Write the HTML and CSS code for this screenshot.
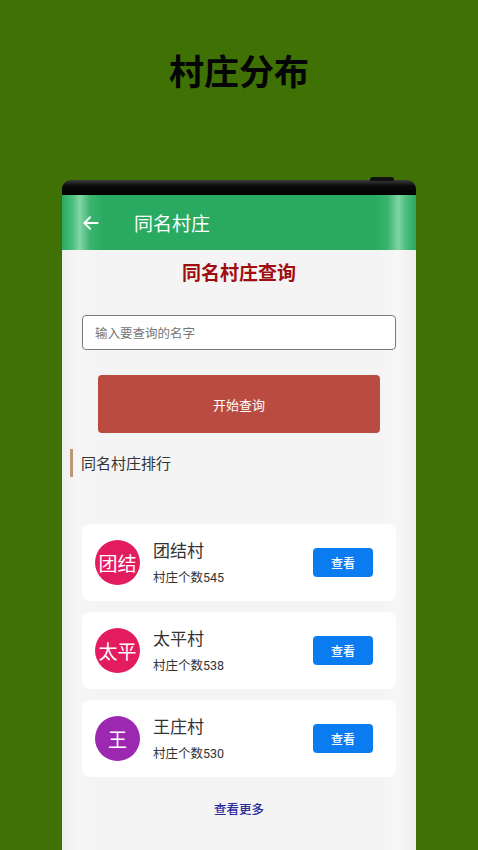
FILE: index.html
```html
<!DOCTYPE html>
<html lang="zh-CN">
<head>
    <meta charset="UTF-8">
    <meta name="viewport" content="width=device-width, initial-scale=1.0">
    <title>村庄分布</title>
    <link rel="stylesheet" href="styles.css">
</head>
<body>
    <h1 class="page-title">村庄分布</h1>

    <div class="phone">
        <div class="bezel"><span class="camera"></span></div>

        <div class="app-bar">
            <svg class="back-icon" viewBox="0 0 24 24" width="20" height="20">
                <path d="M20 12H5M11 5l-7 7 7 7" fill="none" stroke="#fff" stroke-width="2.2" stroke-linecap="round" stroke-linejoin="round"/>
            </svg>
            <span class="app-title">同名村庄</span>
        </div>

        <div class="content">
            <h2 class="query-title">同名村庄查询</h2>
            <input class="name-input" type="text" placeholder="输入要查询的名字">
            <button class="query-btn">开始查询</button>

            <div class="section-head">同名村庄排行</div>

            <div class="rank-list">
                <div class="rank-card">
                    <div class="avatar pink">团结</div>
                    <div class="rank-info">
                        <div class="rank-name">团结村</div>
                        <div class="rank-count">村庄个数545</div>
                    </div>
                    <button class="view-btn">查看</button>
                </div>
                <div class="rank-card">
                    <div class="avatar pink">太平</div>
                    <div class="rank-info">
                        <div class="rank-name">太平村</div>
                        <div class="rank-count">村庄个数538</div>
                    </div>
                    <button class="view-btn">查看</button>
                </div>
                <div class="rank-card">
                    <div class="avatar purple">王</div>
                    <div class="rank-info">
                        <div class="rank-name">王庄村</div>
                        <div class="rank-count">村庄个数530</div>
                    </div>
                    <button class="view-btn">查看</button>
                </div>
            </div>

            <div class="more-link">查看更多</div>
        </div>
    </div>
</body>
</html>
```

FILE: styles.css
```css
/* General Styling */
body {
    margin: 0;
    width: 478px;
    height: 850px;
    overflow: hidden;
    background: #3f7104;
    font-family: Roboto, "Noto Sans CJK SC", sans-serif;
}

.page-title {
    margin: 0;
    padding-top: 48px;
    height: 44px;
    line-height: 44px;
    text-align: center;
    font-family: "Noto Sans CJK SC", sans-serif;
    font-size: 35px;
    font-weight: 700;
    color: #050505;
}

/* Phone frame */
.phone {
    position: relative;
    width: 354px;
    margin: 88px 0 0 62px;
}

.bezel {
    position: relative;
    height: 15px;
    background: linear-gradient(to bottom, #3a3a3a 0%, #0a0a0a 40%, #000 100%);
    border-radius: 9px 9px 0 0;
}

.camera {
    position: absolute;
    top: -3px;
    right: 22px;
    width: 24px;
    height: 4px;
    background: #111;
    border-radius: 3px 3px 0 0;
}

.app-bar {
    display: flex;
    align-items: center;
    height: 55px;
    padding-left: 19px;
    background: linear-gradient(to right, #2aa860 0%, #4cc07f 3%, #84d5a8 5%, #3ab46d 8%, #2aa961 12%, #2aa961 88%, #38b36c 92%, #80d4a5 95%, #4fbf80 97%, #2aa860 100%);
}

.back-icon {
    display: block;
}

.app-title {
    margin-left: 33px;
    font-family: "Noto Sans CJK SC", sans-serif;
    font-size: 19px;
    color: #fff;
}

/* Content */
.content {
    display: flex;
    flex-direction: column;
    align-items: center;
    height: 620px;
    background: linear-gradient(to right, #eeeeee 0%, #f6f6f6 4%, #f4f4f4 10%, #f4f4f4 90%, #f7f7f8 95%, #eeeeee 100%);
}

.query-title {
    margin: 10px 0 0;
    line-height: 24px;
    font-family: "Noto Sans CJK SC", sans-serif;
    font-size: 19px;
    font-weight: 700;
    color: #a00d10;
}

.name-input {
    box-sizing: border-box;
    width: 314px;
    height: 35px;
    margin-top: 31px;
    padding: 0 12px;
    border: 1px solid #7a7a7a;
    border-radius: 4px;
    background: #fff;
    font-family: "Noto Sans CJK SC", sans-serif;
    font-size: 12.5px;
    outline: none;
}

.name-input::placeholder {
    color: #777;
}

.query-btn {
    width: 282px;
    height: 58px;
    margin-top: 25px;
    border: none;
    border-radius: 4px;
    background: #b94b40;
    color: #fff;
    font-family: "Noto Sans CJK SC", sans-serif;
    font-size: 13px;
}

.section-head {
    align-self: flex-start;
    box-sizing: border-box;
    height: 28px;
    margin: 16px 0 0 8px;
    padding-left: 8px;
    border-left: 3px solid #bb9878;
    line-height: 28px;
    font-family: "Noto Sans CJK SC", sans-serif;
    font-size: 15px;
    color: #333;
}

/* Rank list */
.rank-list {
    display: flex;
    flex-direction: column;
    gap: 11px;
    width: 314px;
    margin-top: 47px;
}

.rank-card {
    display: flex;
    align-items: center;
    height: 77px;
    padding: 0 23px 0 13px;
    background: #fff;
    border-radius: 8px;
}

.avatar {
    flex-shrink: 0;
    width: 45px;
    height: 45px;
    border-radius: 50%;
    display: flex;
    justify-content: center;
    align-items: center;
    color: #fff;
    font-family: "Noto Sans CJK SC", sans-serif;
    font-size: 19px;
}

.avatar.pink {
    background: #e31c60;
}

.avatar.purple {
    background: #9c27b0;
}

.rank-info {
    flex: 1;
    margin-left: 13px;
    padding-top: 2px;
}

.rank-name {
    font-size: 17px;
    line-height: 22px;
    color: #333;
}

.rank-count {
    margin-top: 7px;
    font-size: 12.5px;
    line-height: 18px;
    color: #333;
}

.view-btn {
    width: 60px;
    height: 29px;
    border: none;
    border-radius: 4px;
    background: #0a7cf0;
    color: #fff;
    font-family: "Noto Sans CJK SC", sans-serif;
    font-size: 12px;
    font-weight: 500;
}

.more-link {
    margin-top: 22px;
    font-family: "Noto Sans CJK SC", sans-serif;
    font-size: 12.5px;
    font-weight: 500;
    color: #2b2a9c;
}
```
